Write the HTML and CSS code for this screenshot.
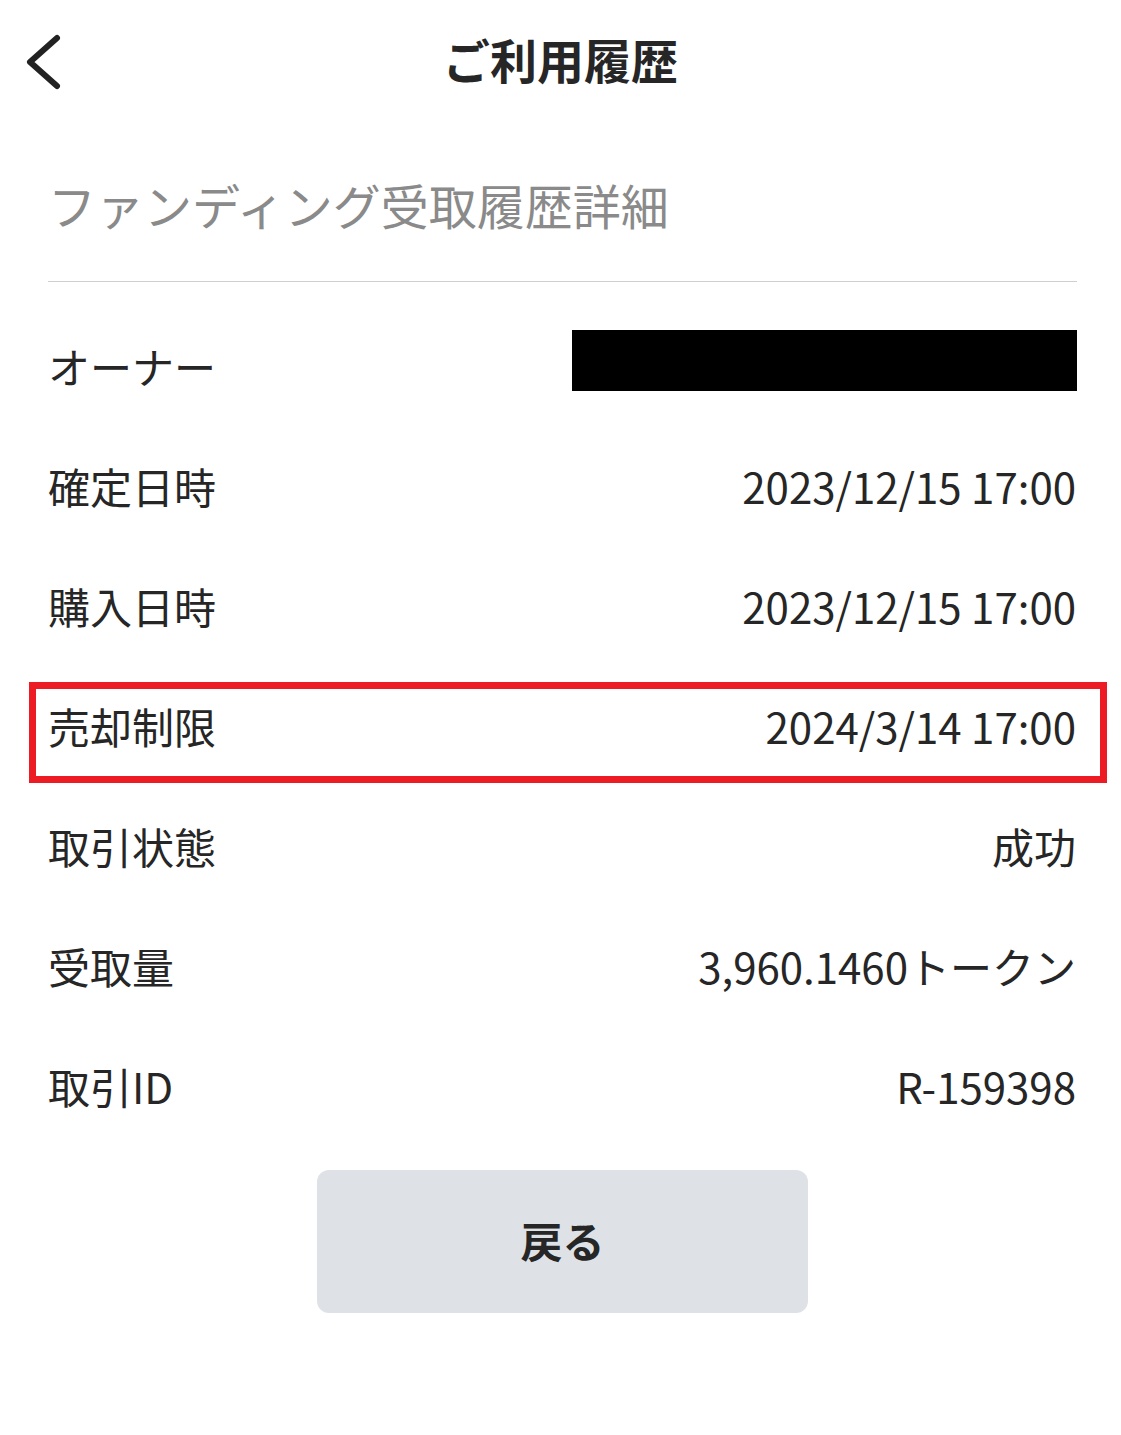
FILE: index.html
```html
<!DOCTYPE html>
<html lang="ja">
<head>
  <meta charset="UTF-8">
  <title>ご利用履歴</title>
  <link rel="stylesheet" href="styles.css">
</head>
<body>
  <header class="topbar">
    <button class="back-button" aria-label="戻る">
      <svg width="40" height="60" viewBox="0 0 40 60">
        <polyline points="33,6 6,30 33,54" fill="none" stroke="#222" stroke-width="6" stroke-linecap="round" stroke-linejoin="round"/>
      </svg>
    </button>
    <h1 class="title">ご利用履歴</h1>
  </header>

  <main class="content">
    <h2 class="subtitle">ファンディング受取履歴詳細</h2>

    <div class="detail-list">
      <div class="row">
        <span class="label">オーナー</span>
        <span class="redacted"></span>
      </div>
      <div class="row">
        <span class="label">確定日時</span>
        <span class="value">2023/12/15 17:00</span>
      </div>
      <div class="row">
        <span class="label">購入日時</span>
        <span class="value">2023/12/15 17:00</span>
      </div>
      <div class="row highlight">
        <span class="label">売却制限</span>
        <span class="value">2024/3/14 17:00</span>
      </div>
      <div class="row">
        <span class="label">取引状態</span>
        <span class="value">成功</span>
      </div>
      <div class="row">
        <span class="label">受取量</span>
        <span class="value">3,960.1460トークン</span>
      </div>
      <div class="row">
        <span class="label">取引ID</span>
        <span class="value">R-159398</span>
      </div>
    </div>

    <div class="actions">
      <button class="return-button">戻る</button>
    </div>
  </main>
</body>
</html>
```

FILE: styles.css
```css
body {
  margin: 0;
  padding: 0;
  background-color: #fff;
  color: #262626;
  font-family: "Noto Sans CJK JP", "Noto Sans", sans-serif;
}

.topbar {
  position: relative;
  height: 125px;
  box-sizing: border-box;
  padding-bottom: 8px;
  display: flex;
  align-items: center;
  justify-content: center;
}

.back-button {
  position: absolute;
  left: 24px;
  top: 32px;
  padding: 0;
  border: none;
  background: transparent;
  cursor: pointer;
}

.back-button svg {
  display: block;
}

.title {
  margin: 0;
  font-size: 47px;
  font-weight: 700;
  color: #262626;
  line-height: 1;
}

.content {
  padding: 0 44px 0 48px;
}

.subtitle {
  margin: 0;
  padding: 43px 0 41px;
  line-height: 72px;
  font-size: 48px;
  font-weight: 400;
  color: #8a8a8a;
  border-bottom: 1px solid #cfcfcf;
}

.detail-list {
  padding-top: 24px;
}

.row {
  position: relative;
  height: 120px;
  display: flex;
  align-items: center;
  justify-content: space-between;
  font-size: 42px;
  line-height: 60px;
}

.value {
  text-align: right;
  margin-right: 1px;
}

.redacted {
  width: 505px;
  height: 61px;
  margin-top: -12px;
  background-color: #000;
}

/* annotation frame */
.highlight::after {
  content: "";
  position: absolute;
  left: -19px;
  right: -30px;
  top: 16px;
  bottom: 3px;
  border: 7px solid #ed1c24;
  pointer-events: none;
}

.actions {
  display: flex;
  justify-content: center;
  padding-top: 24px;
}

.return-button {
  width: 491px;
  height: 143px;
  padding: 0 0 5px;
  border: none;
  border-radius: 12px;
  background-color: #dee2e6;
  color: #262626;
  font-family: "Noto Sans CJK JP", "Noto Sans", sans-serif;
  font-size: 42px;
  font-weight: 700;
  cursor: pointer;
}
```
